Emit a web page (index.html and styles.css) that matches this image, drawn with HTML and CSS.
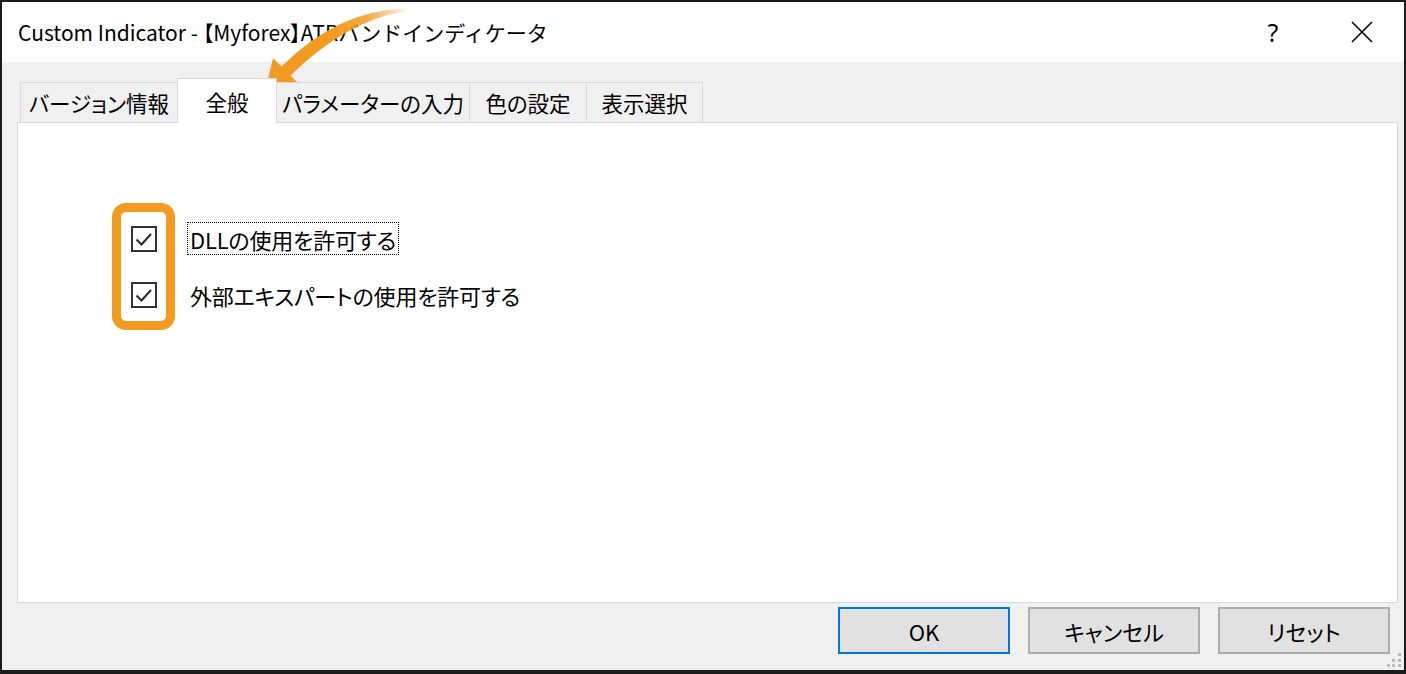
FILE: index.html
```html
<!DOCTYPE html>
<html lang="ja">
<head>
<meta charset="utf-8">
<title>Custom Indicator</title>
<link rel="stylesheet" href="styles.css">
</head>
<body>
<div class="window">
  <div class="titlebar">
    <span class="title">Custom Indicator - <span class="title-tag">【Myforex】</span>ATRバンドインディケータ</span>
    <div class="caption">
      <div class="caption-btn help">?</div>
      <div class="caption-btn">
        <svg width="24" height="24" viewBox="0 0 24 24"><path d="M2 2 L22 22 M22 2 L2 22" stroke="#000" stroke-width="1.6" fill="none"/></svg>
      </div>
    </div>
  </div>
  <div class="client">
    <div class="tabs">
      <div class="tab tab-version">バージョン情報</div>
      <div class="tab tab-general active">全般</div>
      <div class="tab tab-params">パラメーターの入力</div>
      <div class="tab tab-colors">色の設定</div>
      <div class="tab tab-display">表示選択</div>
    </div>
    <div class="panel">
      <div class="options">
        <div class="highlight"></div>
        <div class="option">
          <span class="checkbox"><svg width="22" height="22" viewBox="0 0 22 22"><path d="M3.5 11.5 L8.5 16.5 L18 6" stroke="#2b2b2b" stroke-width="2" fill="none"/></svg></span>
          <span class="label focus">DLLの使用を許可する</span>
        </div>
        <div class="option">
          <span class="checkbox"><svg width="22" height="22" viewBox="0 0 22 22"><path d="M3.5 11.5 L8.5 16.5 L18 6" stroke="#2b2b2b" stroke-width="2" fill="none"/></svg></span>
          <span class="label">外部エキスパートの使用を許可する</span>
        </div>
      </div>
    </div>
    <div class="buttons">
      <div class="btn default">OK</div>
      <div class="btn">キャンセル</div>
      <div class="btn">リセット</div>
    </div>
    <svg class="grip" width="16" height="16" viewBox="0 0 16 16">
      <rect x="12" y="1" width="3" height="3" fill="#bdbdbd"/>
      <rect x="6" y="7" width="3" height="3" fill="#bdbdbd"/>
      <rect x="12" y="7" width="3" height="3" fill="#bdbdbd"/>
      <rect x="1" y="12" width="3" height="3" fill="#bdbdbd"/>
      <rect x="6" y="12" width="3" height="3" fill="#bdbdbd"/>
      <rect x="12" y="12" width="3" height="3" fill="#bdbdbd"/>
    </svg>
  </div>
</div>
<svg class="arrow" width="1406" height="674" viewBox="0 0 1406 674">
  <defs>
    <linearGradient id="ag" x1="404" y1="10" x2="330" y2="28" gradientUnits="userSpaceOnUse">
      <stop offset="0" stop-color="#f39a21" stop-opacity="0.15"/>
      <stop offset="0.5" stop-color="#f39a21" stop-opacity="0.85"/>
      <stop offset="1" stop-color="#f39a21"/>
    </linearGradient>
  </defs>
  <path d="M404 8.5 Q337 11 281.5 66.5 L273 58 L265 92 L299 84 L290.5 75.5 Q346 21 404 11.5 Z" fill="url(#ag)"/>
</svg>
</body>
</html>
```
FILE: styles.css
```css
* { box-sizing: border-box; }
html, body { margin: 0; padding: 0; }
body {
  width: 1406px;
  height: 674px;
  overflow: hidden;
  background: #1b1b1b;
  position: relative;
  font-family: "Noto Sans CJK JP", "Noto Sans", sans-serif;
  font-feature-settings: "palt";
  color: #000;
}
.window {
  margin: 2px 2px 0 2px;
  width: 1402px;
  height: 668px;
  background: #f0f0f0;
  display: flex;
  flex-direction: column;
  position: relative;
}
.titlebar {
  height: 60px;
  background: #fff;
  display: flex;
  align-items: center;
  padding-left: 16px;
}
.title {
  flex: 1;
  font-size: 21px;
  font-feature-settings: normal;
}
.title-tag { font-feature-settings: "palt"; }
.caption {
  display: flex;
  gap: 5px;
  align-self: stretch;
}
.caption-btn {
  width: 84px;
  display: flex;
  align-items: center;
  justify-content: center;
}
.help {
  font-family: "Noto Sans", sans-serif;
  font-size: 25px;
}
.client {
  flex: 1;
  display: flex;
  flex-direction: column;
  padding: 16px 6px 16px 15px;
  position: relative;
}
.tabs {
  display: flex;
  align-items: flex-end;
  height: 44px;
  padding-left: 3px;
  position: relative;
  z-index: 1;
}
.tab {
  height: 40px;
  border: 1px solid #d9d9d9;
  border-bottom: none;
  background: #f0f0f0;
  font-size: 21.5px;
  display: flex;
  align-items: center;
  justify-content: center;
  margin-left: -1px;
  white-space: nowrap;
}
.tab:first-child { margin-left: 0; }
.tab-version { width: 158px; }
.tab-general { width: 100px; }
.tab-params { width: 194px; }
.tab-colors { width: 118px; }
.tab-display { width: 117px; }
.tab.active {
  height: 45px;
  background: #fff;
  margin-bottom: -1px;
  position: relative;
  z-index: 2;
}
.panel {
  flex: 1;
  background: #fff;
  border: 1px solid #d9d9d9;
}
.options {
  position: relative;
  padding: 99px 0 0 113px;
  display: flex;
  flex-direction: column;
  gap: 23px;
}
.highlight {
  position: absolute;
  left: 94px;
  top: 80px;
  width: 63px;
  height: 127px;
  border: 9px solid #f39a21;
  border-radius: 14px;
}
.option {
  display: flex;
  align-items: center;
  height: 33px;
}
.checkbox {
  width: 26px;
  height: 26px;
  border: 2px solid #333;
  display: flex;
  align-items: center;
  justify-content: center;
  background: #fff;
}
.label {
  margin-left: 30px;
  height: 33px;
  padding: 0 2px;
  border: 1px solid transparent;
  font-size: 22px;
  letter-spacing: -0.2px;
  display: flex;
  align-items: center;
}
.label.focus { border: 1px dotted #000; }
.buttons {
  display: flex;
  justify-content: flex-end;
  gap: 18px;
  margin-top: 4px;
  padding-right: 8px;
}
.btn {
  width: 172px;
  height: 47px;
  background: #e1e1e1;
  border: 2px solid #adadad;
  font-size: 22px;
  display: flex;
  align-items: center;
  justify-content: center;
}
.btn.default { border-color: #0078d7; }
.grip {
  position: absolute;
  right: 2px;
  bottom: 2px;
}
.arrow {
  position: absolute;
  left: 0;
  top: 0;
  pointer-events: none;
}
```
